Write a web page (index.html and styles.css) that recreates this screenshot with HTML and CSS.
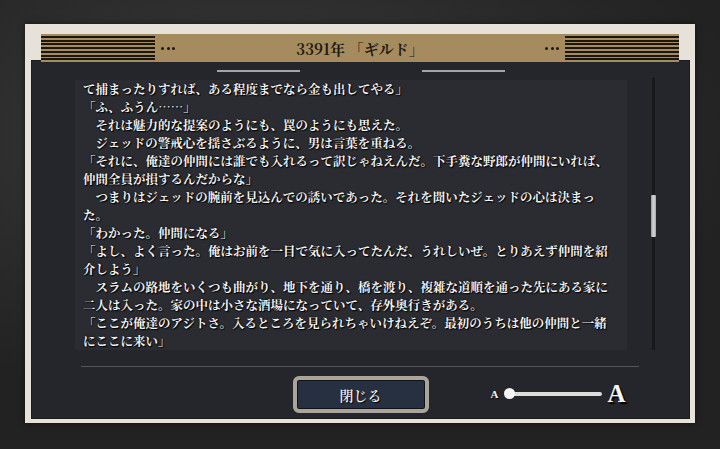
FILE: index.html
```html
<!DOCTYPE html>
<html lang="ja">
<head>
<meta charset="utf-8">
<title>3391年 「ギルド」</title>
<link rel="stylesheet" href="styles.css">
</head>
<body>
<div class="frame">
  <header class="header">
    <div class="stripes"></div>
    <div class="dots"><i></i><i></i><i></i></div>
    <h1 class="title">3391年 「ギルド」</h1>
    <div class="dots"><i></i><i></i><i></i></div>
    <div class="stripes"></div>
  </header>
  <section class="panel">
    <div class="tabs"><span class="tab"></span><span class="tab"></span></div>
    <div class="reader">
      <div class="text">
        <p>て捕まったりすれば、ある程度までなら金も出してやる」</p>
        <p>「ふ、ふうん……」</p>
        <p>　それは魅力的な提案のようにも、罠のようにも思えた。</p>
        <p>　ジェッドの警戒心を揺さぶるように、男は言葉を重ねる。</p>
        <p>「それに、俺達の仲間には誰でも入れるって訳じゃねえんだ。下手糞な野郎が仲間にいれば、<br>仲間全員が損するんだからな」</p>
        <p>　つまりはジェッドの腕前を見込んでの誘いであった。それを聞いたジェッドの心は決まっ<br>た。</p>
        <p>「わかった。仲間になる」</p>
        <p>「よし、よく言った。俺はお前を一目で気に入ってたんだ、うれしいぜ。とりあえず仲間を紹<br>介しよう」</p>
        <p>　スラムの路地をいくつも曲がり、地下を通り、橋を渡り、複雑な道順を通った先にある家に<br>二人は入った。家の中は小さな酒場になっていて、存外奥行きがある。</p>
        <p>「ここが俺達のアジトさ。入るところを見られちゃいけねえぞ。最初のうちは他の仲間と一緒<br>にここに来い」</p>
      </div>
      <div class="scrollbar"><div class="thumb"></div></div>
    </div>
    <div class="separator"></div>
    <div class="footer">
      <div></div>
      <button class="close">閉じる</button>
      <div class="fontsize">
        <span class="a-small">A</span>
        <div class="slider"><span class="knob"></span></div>
        <span class="a-big">A</span>
      </div>
    </div>
  </section>
</div>
</body>
</html>
```
FILE: styles.css
```css
html, body {
  margin: 0;
  padding: 0;
}
body {
  width: 720px;
  height: 449px;
  overflow: hidden;
  background:
    radial-gradient(ellipse 70% 60% at 35% 30%, #3b3b3b 0%, #2e2e2e 50%, #222 100%);
  font-family: "Noto Serif CJK JP", "Liberation Serif", "Noto Sans CJK JP", serif;
}
.frame {
  margin: 24px 0 0 25px;
  width: 659px;
  height: 385px;
  padding: 10px 5px 4px 6px;
  background: #e6e2d9;
  box-shadow: 0 0 6px rgba(0,0,0,0.5);
  display: flex;
  flex-direction: column;
}
.header {
  position: relative;
  z-index: 1;
  margin: 0 11px -2px 10px;
  height: 28px;
  background: #a68b5f;
  display: flex;
  align-items: center;
}
.stripes {
  width: 114px;
  height: 26px;
  margin-top: 2px;
  align-self: flex-start;
  background: repeating-linear-gradient(to bottom, #1c1610 0 2px, #a68b5f 2px 3.7px);
}
.dots {
  display: flex;
  gap: 2.5px;
  margin: 0 6px;
}
.dots i {
  display: block;
  width: 3px;
  height: 3px;
  border-radius: 50%;
  background: #1e1812;
}
.title {
  flex: 1;
  margin: 0;
  text-align: center;
  font-size: 15px;
  font-weight: 700;
  color: #221b13;
  letter-spacing: 0;
}
.panel {
  flex: 1;
  background: #25262b;
  padding-top: 10px;
  display: flex;
  flex-direction: column;
  box-shadow: inset 0 0 0 1px #1b1c20;
}
.tabs {
  display: flex;
  justify-content: center;
  gap: 122px;
  height: 2px;
}
.tab {
  width: 83px;
  height: 2px;
  background: #a5a5a7;
}
.reader {
  display: flex;
  margin-top: 8px;
  margin-left: 44px;
  height: 270px;
}
.text {
  width: 544px;
  height: 270px;
  padding-left: 8px;
  overflow: hidden;
  background: #2b2c31;
  color: #f4f4f4;
  font-size: 12.5px;
  line-height: 18px;
  font-weight: 700;
  white-space: nowrap;
  text-shadow: 1px 1px 1px #000, 0 0 2px #000;
}
.text p {
  margin: 0;
}
.scrollbar {
  position: relative;
  width: 3px;
  margin-left: 25px;
  margin-top: -2px;
  background: #18191c;
}
.thumb {
  position: absolute;
  left: -1px;
  top: 117px;
  width: 5px;
  height: 42px;
  border-radius: 1px;
  background: linear-gradient(to right, #9c9c9c, #d4d4d4 50%, #a8a8a8);
}
.separator {
  margin: 16px 0 0 50px;
  width: 558px;
  height: 1px;
  background: #55565c;
}
.footer {
  margin-top: 9px;
  display: grid;
  grid-template-columns: 1fr auto 1fr;
  align-items: center;
}
.close {
  width: 136px;
  height: 37px;
  padding: 0;
  border: 4px solid #a9a59b;
  border-radius: 6px;
  background: #263040;
  box-shadow: inset 0 0 0 1px #111318;
  color: #f2f2f2;
  font-family: "Noto Serif CJK JP", "Liberation Serif", "Noto Sans CJK JP", serif;
  font-size: 14px;
  font-weight: 600;
  text-shadow: 1px 1px 1px #000;
}
.fontsize {
  display: flex;
  align-items: center;
  padding-left: 62px;
  margin-top: -2px;
}
.a-small {
  font-family: "Liberation Serif", serif;
  font-weight: 700;
  font-size: 11px;
  color: #f2f2f2;
  text-shadow: 1px 1px 1px #000;
}
.slider {
  position: relative;
  margin-left: 11px;
  width: 93px;
  height: 4px;
  border-radius: 2px;
  background: #dcdcdc;
}
.knob {
  position: absolute;
  left: -5px;
  top: -4px;
  width: 11px;
  height: 11px;
  border-radius: 50%;
  background: #f4f4f4;
}
.a-big {
  margin-left: 5px;
  font-family: "Liberation Serif", serif;
  font-weight: 700;
  font-size: 25px;
  line-height: 25px;
  color: #f6f6f6;
  text-shadow: 2px 2px 1px #000;
}
```
